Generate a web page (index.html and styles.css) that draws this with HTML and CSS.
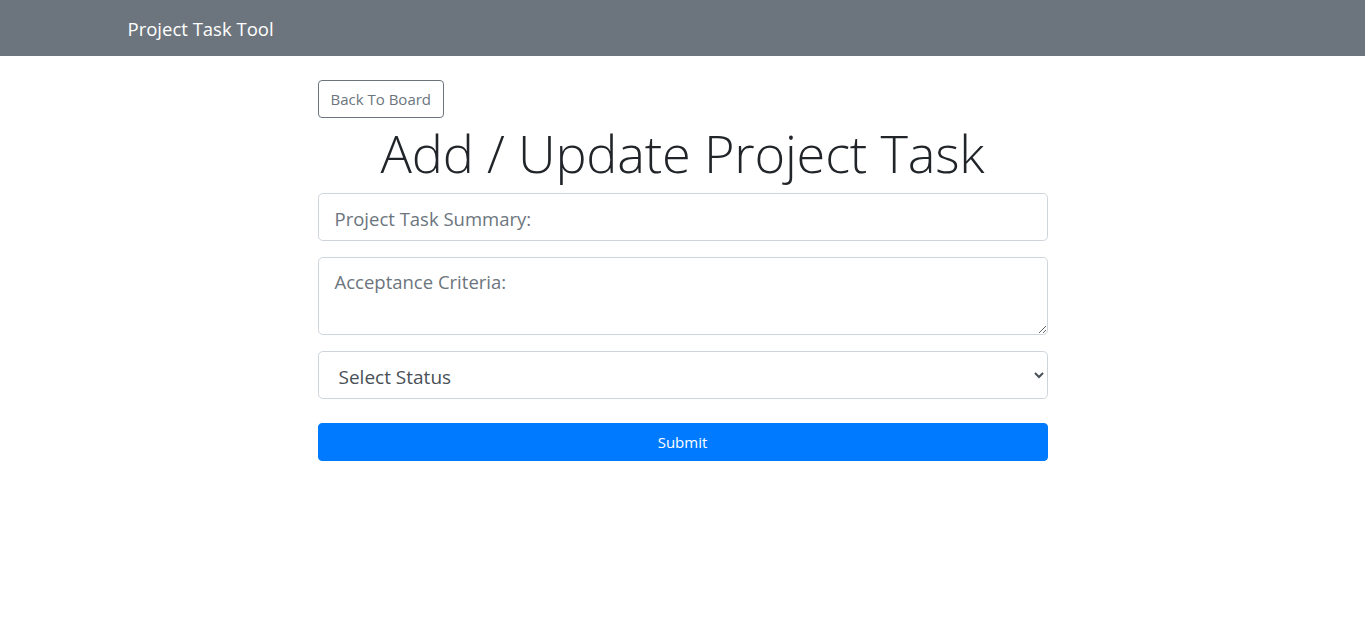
FILE: index.html
```html
<!DOCTYPE html>
<html lang="en">
<head>
<meta charset="utf-8">
<title>Project Task Tool</title>
<link rel="stylesheet" href="styles.css">
</head>
<body>
<nav class="navbar">
  <div class="container">
    <a class="navbar-brand" href="#">Project Task Tool</a>
  </div>
</nav>
<main class="page">
  <div class="container">
    <div class="form-col">
      <a class="btn btn-outline" href="#">Back To Board</a>
      <h4 class="title">Add / Update Project Task</h4>
      <form class="task-form">
        <div class="form-group">
          <input type="text" class="form-control" placeholder="Project Task Summary:">
        </div>
        <div class="form-group">
          <textarea class="form-control" placeholder="Acceptance Criteria:"></textarea>
        </div>
        <div class="form-group">
          <select class="form-control form-select">
            <option value="">Select Status</option>
            <option value="TO_DO">TO DO</option>
            <option value="IN_PROGRESS">IN PROGRESS</option>
            <option value="DONE">DONE</option>
          </select>
        </div>
        <input type="submit" class="btn btn-primary" value="Submit">
      </form>
    </div>
  </div>
</main>
</body>
</html>
```

FILE: styles.css
```css
* { box-sizing: border-box; }

html, body {
  margin: 0;
  padding: 0;
}

body {
  font-family: "Open Sans", "Noto Sans", "Liberation Sans", sans-serif;
  font-size: 16px;
  line-height: 1.5;
  color: #212529;
  background: #fff;
}

.container {
  width: 1140px;
  margin: 0 auto;
  padding: 0 15px;
}

.navbar {
  background: #6c757d;
  height: 56px;
  display: flex;
  align-items: center;
}

.navbar-brand {
  color: #fff;
  font-size: 18.5px;
  line-height: 30px;
  text-decoration: none;
  display: inline-block;
  padding: 6px 0 4px;
}

.page {
  padding-top: 24px;
}

.form-col {
  width: 730px;
  margin: 0 auto;
}

.btn {
  display: inline-block;
  font-family: inherit;
  font-size: 15px;
  line-height: 24px;
  padding: 6px 12px;
  border: 1px solid transparent;
  border-radius: 4px;
  text-decoration: none;
  text-align: center;
  cursor: pointer;
}

.btn-outline {
  color: #6c757d;
  border-color: #6c757d;
  background: #fff;
  font-weight: 400;
}

.title {
  margin: 0 0 8px;
  padding-top: 3px;
  font-size: 52.3px;
  font-weight: 300;
  line-height: 64px;
  text-align: center;
  color: #212529;
  letter-spacing: -0.2px;
}

.form-group {
  margin-bottom: 16px;
}

.form-control {
  display: block;
  width: 100%;
  height: 48px;
  padding: 9px 16px 7px;
  font-family: inherit;
  font-size: 18.5px;
  line-height: 30px;
  color: #495057;
  background: #fff;
  border: 1px solid #ced4da;
  border-radius: 4.8px;
  margin: 0;
}

.form-control::placeholder {
  color: #6c757d;
  opacity: 1;
}

textarea.form-control {
  height: 78px;
  resize: vertical;
}

.form-select {
  padding: 10px 16px 6px;
  font-size: 19px;
}

.btn-primary {
  display: block;
  width: 100%;
  margin-top: 24px;
  height: 38px;
  padding-top: 6px;
  padding-bottom: 6px;
  color: #fff;
  background: #007bff;
  border-color: #007bff;
}
```
